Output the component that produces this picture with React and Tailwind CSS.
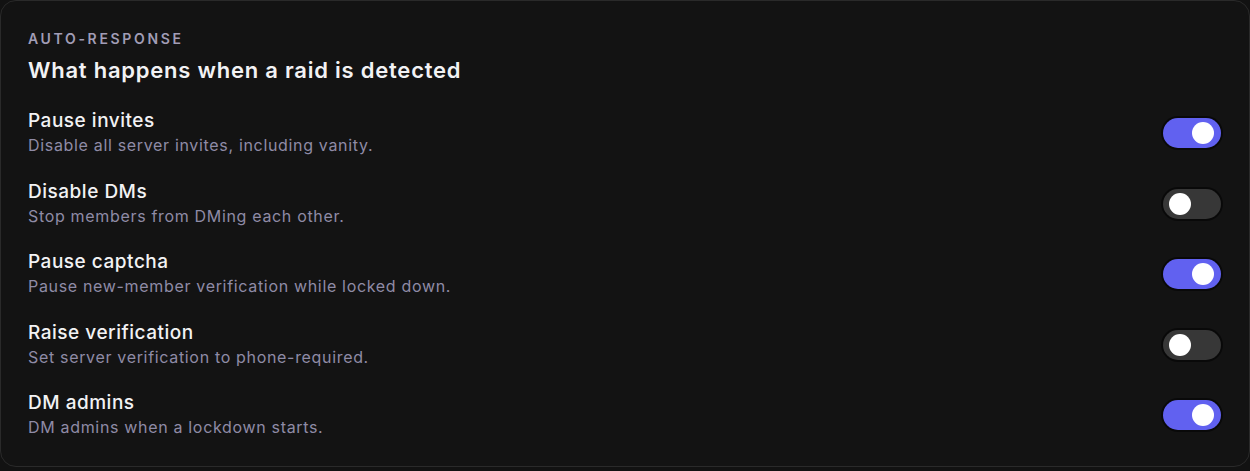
import React, { useState } from "react";

const rows = [
  { title: "Pause invites", desc: "Disable all server invites, including vanity.", on: true },
  { title: "Disable DMs", desc: "Stop members from DMing each other.", on: false },
  { title: "Pause captcha", desc: "Pause new-member verification while locked down.", on: true },
  { title: "Raise verification", desc: "Set server verification to phone-required.", on: false },
  { title: "DM admins", desc: "DM admins when a lockdown starts.", on: true },
];

function Toggle({ on, onClick }) {
  return (
    <button
      onClick={onClick}
      className={`flex h-[30px] w-[58px] shrink-0 items-center rounded-full px-[5px] ring-2 ring-black/50 ${
        on ? "justify-end bg-[#6161f0]" : "justify-start bg-[#373737]"
      }`}
    >
      <span className={`block h-[22px] w-[22px] rounded-full bg-white ${on ? "mr-[2px]" : "ml-[1px]"}`} />
    </button>
  );
}

export default function App() {
  const [state, setState] = useState(rows.map((r) => r.on));
  return (
    <div className="min-h-[471px] w-full bg-[#121212]" style={{ fontFamily: "Inter, 'Noto Sans', sans-serif" }}>
      <div className="h-[467px] w-full rounded-2xl border border-[#2a2a2a] bg-[#131313] pl-[27px] pr-7 pt-7">
        <div className="text-[14px] font-semibold uppercase leading-5 tracking-[0.19em] text-[#a19db6]">
          Auto-response
        </div>
        <div className="mt-[7px] text-[22px] font-semibold leading-7 tracking-[0.035em] text-[#f2f2f4]">
          What happens when a raid is detected
        </div>
        <div className="mt-6 flex flex-col gap-[20.6px]">
          {rows.map((r, i) => (
            <div key={r.title} className="flex items-center justify-between">
              <div className="flex flex-col">
                <div className="text-[19px] font-medium leading-[26px] tracking-[0.027em] text-[#f2f2f4]">{r.title}</div>
                <div className="text-[16px] leading-[23px] pb-px tracking-[0.042em] text-[#8f8ba6]">{r.desc}</div>
              </div>
              <Toggle on={state[i]} onClick={() => setState((s) => s.map((v, j) => (j === i ? !v : v)))} />
            </div>
          ))}
        </div>
      </div>
    </div>
  );
}
